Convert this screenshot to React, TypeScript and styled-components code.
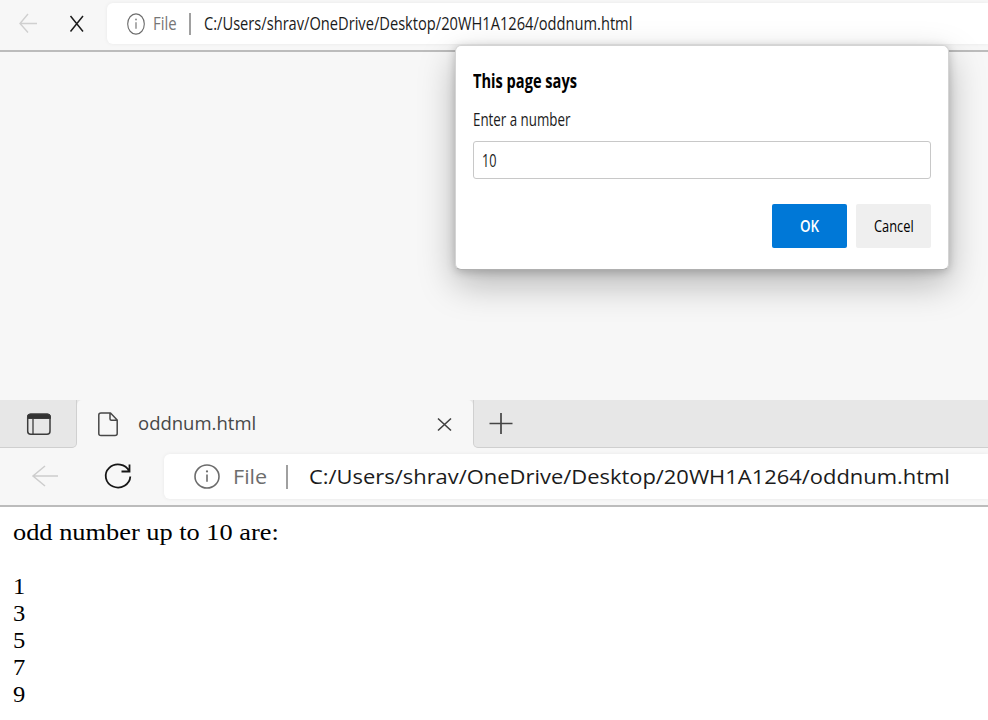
import React, { useLayoutEffect, useRef, useState } from "react";
import styled, { createGlobalStyle } from "styled-components";

const GlobalStyle = createGlobalStyle`
  * { box-sizing: border-box; }
  body { margin: 0; background: #fff; overflow: hidden; }
`;

const sans = `"Open Sans", "Noto Sans", sans-serif`;
const serif = `"Liberation Serif", "Times New Roman", serif`;

const Screen = styled.main`
  width: 988px;
  height: 720px;
  display: flex;
  flex-direction: column;
  overflow: hidden;
  font-family: ${sans};
`;

const PromptWindow = styled.section`
  position: relative;
  height: 400px;
  flex: none;
  overflow: hidden;
  background: #f7f7f7;
`;

const ResultWindow = styled.section`
  flex: 1;
  display: flex;
  flex-direction: column;
  background: #fff;
`;

const Toolbar = styled.header<{ $height: number; $top: number }>`
  height: ${(p) => p.$height}px;
  padding-top: ${(p) => p.$top}px;
  display: flex;
  align-items: flex-start;
  background: #f7f7f7;
  border-bottom: 2px solid #bcbcbc;
`;

const NavButtons = styled.div<{ $width: number; $height: number }>`
  flex: none;
  width: ${(p) => p.$width}px;
  height: ${(p) => p.$height}px;
  svg { display: block; }
`;

const AddressBar = styled.div<{ $height: number; $pad: number }>`
  flex: 1;
  height: ${(p) => p.$height}px;
  padding-left: ${(p) => p.$pad}px;
  display: flex;
  align-items: center;
  background: #fff;
  border-radius: 6px 0 0 6px;
  box-shadow: 0 0 4px rgba(0, 0, 0, 0.06);
  svg { flex: none; }
`;

const Divider = styled.span<{ $left: number; $right: number; $height: number }>`
  width: 2px;
  height: ${(p) => p.$height}px;
  margin: 0 ${(p) => p.$right}px 0 ${(p) => p.$left}px;
  background: #a0a0a0;
`;

const TextBox = styled.span<{ $width: number; $size: number; $weight?: number; $color?: string; $left?: number; $line?: number; $lift?: number }>`
  display: block;
  flex: none;
  width: ${(p) => p.$width}px;
  margin-left: ${(p) => p.$left ?? 0}px;
  padding-bottom: ${(p) => p.$lift ?? 0}px;
  color: ${(p) => p.$color ?? "#1b1b1b"};
  font-size: ${(p) => p.$size}px;
  font-weight: ${(p) => p.$weight ?? 400};
  line-height: ${(p) => p.$line ?? 24}px;
  white-space: nowrap;
`;

const Glyphs = styled.span`
  display: inline-block;
  transform-origin: 0 50%;
`;

type FitProps = React.ComponentProps<typeof TextBox> & { children: React.ReactNode };

/* Stretches or condenses a line of text so that it fills its box. */
function FitText({ children, ...box }: FitProps) {
  const ref = useRef<HTMLSpanElement>(null);
  const [scale, setScale] = useState(1);
  useLayoutEffect(() => {
    if (ref.current) setScale(box.$width / ref.current.offsetWidth);
  }, [box.$width]);
  return (
    <TextBox {...box}>
      <Glyphs ref={ref} style={{ transform: `scaleX(${scale})` }}>{children}</Glyphs>
    </TextBox>
  );
}

const Dialog = styled.div`
  position: absolute;
  left: 455px;
  top: 45px;
  width: 494px;
  height: 225px;
  padding: 23px 17px 0;
  background: #fff;
  border: 1px solid #d4d4d4;
  border-bottom-color: #b0b0b0;
  border-radius: 6px;
  box-shadow: 0 14px 36px rgba(0, 0, 0, 0.27), 0 2px 10px rgba(0, 0, 0, 0.2);
`;

const Message = styled.div`
  padding: 14px 0 9px;
`;

const Field = styled.div`
  height: 38px;
  padding-left: 8px;
  display: flex;
  align-items: center;
  border: 1px solid #c8c8c8;
  border-radius: 3px;
`;

const Actions = styled.div`
  display: flex;
  justify-content: flex-end;
  gap: 9px;
  margin-top: 25px;
`;

const Button = styled.button<{ $primary?: boolean }>`
  width: 75px;
  height: 44px;
  padding: 0;
  display: flex;
  align-items: center;
  justify-content: center;
  border: 0;
  border-radius: 2px;
  font-family: inherit;
  background: ${(p) => (p.$primary ? "#0078d7" : "#efefef")};
`;

const TabStrip = styled.div`
  height: 48px;
  display: flex;
  background: linear-gradient(#e7e7e7 50%, #f7f7f7 50%);
`;

const StripStart = styled.div`
  width: 77px;
  background: #e7e7e7;
  border-right: 1px solid #d0d0d0;
  border-bottom: 1px solid #cfcfcf;
  border-radius: 0 0 5px 0;
  svg { display: block; }
`;

const Tab = styled.div`
  width: 396px;
  display: flex;
  align-items: center;
  padding-left: 20px;
  background: #f7f7f7;
  border-radius: 5px 5px 0 0;
`;

const StripRest = styled.div`
  flex: 1;
  background: #e7e7e7;
  border-left: 1px solid #d0d0d0;
  border-bottom: 1px solid #cfcfcf;
  border-radius: 0 0 0 5px;
  svg { display: block; }
`;

const Output = styled.div`
  padding: 12px 0 0 12.6px;
  font-family: ${serif};
`;

const Gap = styled.div`
  height: 27px;
`;

const TabClose = styled.svg`
  margin-left: 180px;
`;

function Info({ width, height }: { width: number; height: number }) {
  return (
    <svg width={width} height={height} viewBox="0 0 26 26" preserveAspectRatio="none" fill="none" stroke="#6c6c6c" strokeWidth="1.6">
      <circle cx="13" cy="13" r="12" />
      <path d="M13 11v7.5" />
      <circle cx="13" cy="7.7" r="1.1" fill="#6c6c6c" stroke="none" />
    </svg>
  );
}

export default function App() {
  return (
    <Screen>
      <GlobalStyle />
      <PromptWindow>
        <Toolbar $height={52} $top={3}>
          <NavButtons $width={107} $height={41}>
            <svg width="107" height="41" fill="none">
              <path d="M37 20.5H20M28 11L20 20.5L28 29.5" stroke="#d0d0d0" strokeWidth="1.4" />
              <path d="M70.5 13L83 28.5M83 13L70.5 28.5" stroke="#1c1c1c" strokeWidth="1.5" />
            </svg>
          </NavButtons>
          <AddressBar $height={41} $pad={20}>
            <Info width={18} height={22} />
            <FitText $width={24} $left={8} $lift={1} $size={18.7} $color="#767676">File</FitText>
            <Divider $left={12} $right={13} $height={22} />
            <FitText $width={428} $lift={1} $size={18.7}>C:/Users/shrav/OneDrive/Desktop/20WH1A1264/oddnum.html</FitText>
          </AddressBar>
        </Toolbar>
        <Dialog>
          <FitText $width={104} $size={18.7} $weight={700} $color="#000">This page says</FitText>
          <Message>
            <FitText $width={97.5} $size={17.5} $line={25}>Enter a number</FitText>
          </Message>
          <Field>
            <FitText $width={14.5} $lift={1} $size={17.5}>10</FitText>
          </Field>
          <Actions>
            <Button $primary>
              <FitText $width={19} $size={17} $weight={600} $color="#fff">OK</FitText>
            </Button>
            <Button>
              <FitText $width={40} $size={17} $weight={500} $color="#000">Cancel</FitText>
            </Button>
          </Actions>
        </Dialog>
      </PromptWindow>

      <ResultWindow>
        <TabStrip>
          <StripStart>
            <svg width="76" height="47" fill="none" stroke="#3c3c3c">
              <rect x="27.7" y="14.2" width="22.3" height="20" rx="3" strokeWidth="1.5" />
              <path d="M27.5 18.5V17a3 3 0 0 1 3-3h17a3 3 0 0 1 3 3v1.5z" fill="#333" strokeWidth="1" />
              <path d="M33 19v15" strokeWidth="1.3" />
            </svg>
          </StripStart>
          <Tab>
            <svg width="22" height="26" fill="none" stroke="#484848" strokeWidth="1.5" strokeLinejoin="round">
              <path d="M4 2H13.5L20.2 9V22.5Q20.2 24.5 18 24.5H4Q1.8 24.5 1.8 22.5V4Q1.8 2 4 2ZM13 2V8Q13 9.2 14.4 9.2H20" />
            </svg>
            <FitText $width={118} $left={19} $lift={2} $size={18.5} $color="#484848">oddnum.html</FitText>
            <TabClose width="16" height="16" fill="none" stroke="#404040" strokeWidth="1.6">
              <path d="M2 2.5L15 14.5M15 2.5L2 14.5" />
            </TabClose>
          </Tab>
          <StripRest>
            <svg width="50" height="47" fill="none" stroke="#444" strokeWidth="1.7">
              <path d="M15.5 23.5H38.5M27 13V34" />
            </svg>
          </StripRest>
        </TabStrip>
        <Toolbar $height={59} $top={6}>
          <NavButtons $width={164} $height={45}>
            <svg width="164" height="45" fill="none">
              <path d="M58 22H33M45 12L33 22L45 32" stroke="#cdcdcd" strokeWidth="1.5" />
              <path d="M129.2 17.2A12.3 11.5 0 1 0 130.3 22.5M129.5 10.5V17.5H121.5" stroke="#161616" strokeWidth="1.8" />
            </svg>
          </NavButtons>
          <AddressBar $height={45} $pad={30}>
            <Info width={26} height={25} />
            <FitText $width={34.5} $left={13} $size={20} $color="#6d6d6d">File</FitText>
            <Divider $left={18.5} $right={20.5} $height={24} />
            <FitText $width={641} $size={20}>C:/Users/shrav/OneDrive/Desktop/20WH1A1264/oddnum.html</FitText>
          </AddressBar>
        </Toolbar>
        <Output>
          <FitText $width={266} $size={23} $line={27} $color="#000">odd number up to 10 are:</FitText>
          <Gap />
          {[1, 3, 5, 7, 9].map((n) => (
            <FitText key={n} $width={12.8} $size={23} $line={27} $color="#000">{n}</FitText>
          ))}
        </Output>
      </ResultWindow>
    </Screen>
  );
}
